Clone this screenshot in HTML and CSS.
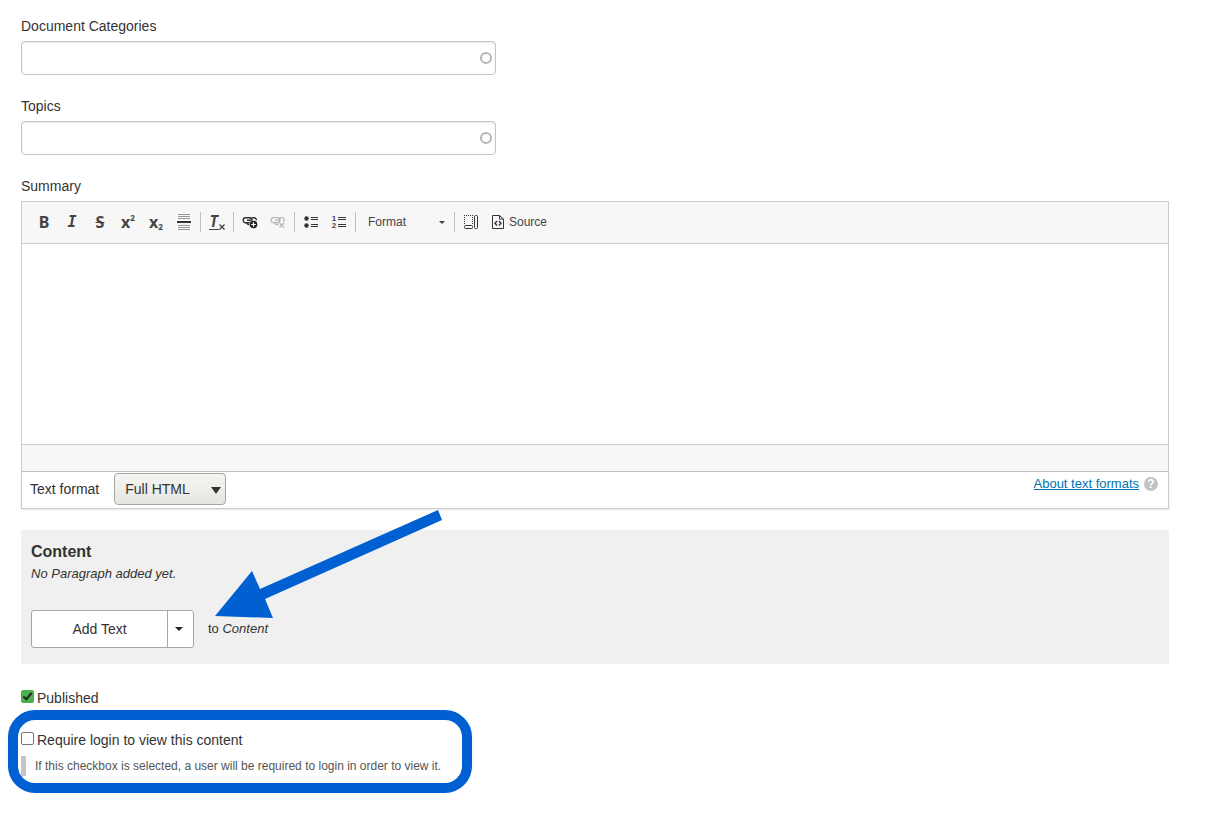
FILE: index.html
```html
<!DOCTYPE html>
<html lang="en">
<head>
  <meta charset="UTF-8">
  <meta name="viewport" content="width=device-width, initial-scale=1.0">
  <title>Create Document</title>
  <link rel="stylesheet" href="styles.css">
</head>
<body>
  <form class="node-form">
    <div class="field">
      <label for="categories">Document Categories</label>
      <div class="autocomplete">
        <input type="text" id="categories">
      </div>
    </div>

    <div class="field">
      <label for="topics">Topics</label>
      <div class="autocomplete">
        <input type="text" id="topics">
      </div>
    </div>

    <div class="field">
      <label for="summary">Summary</label>
      <div class="editor">
        <div class="toolbar">
          <button type="button" class="tool bold" title="Bold">B</button>
          <button type="button" class="tool italic" title="Italic">I</button>
          <button type="button" class="tool strike" title="Strikethrough">S</button>
          <button type="button" class="tool script" title="Superscript">x<sup>2</sup></button>
          <button type="button" class="tool script" title="Subscript">x<sub>2</sub></button>
          <button type="button" class="tool" title="Horizontal line">
            <svg width="14" height="16" viewBox="0 0 14 16">
              <path d="M1 .5h12M1 2.5h12M1 4.5h12M1 11.5h12M1 13.5h12M1 15.5h12" stroke="#999"/>
              <path d="M0 8h14" stroke="#333" stroke-width="2"/>
            </svg>
          </button>
          <span class="separator"></span>
          <button type="button" class="tool clear" title="Remove format">
            <span>T</span>
            <svg width="6" height="6" viewBox="0 0 6 6"><path d="M.5.5l5 5M5.5.5l-5 5" stroke="#444" stroke-width="1.4"/></svg>
          </button>
          <span class="separator"></span>
          <button type="button" class="tool" title="Link">
            <svg width="16" height="14" viewBox="0 0 16 14" fill="none">
              <rect x="1.2" y="2.7" width="8.6" height="5" rx="2.4" stroke="#333" stroke-width="1.4"/>
              <path d="M5 5.2h6M5 7.5a2 2 0 0 0 2 2h2M9.5 2.7H12a2.4 2.4 0 0 1 2.4 2.6" stroke="#333" stroke-width="1.4"/>
              <circle cx="11.5" cy="9.5" r="4.2" fill="#f7f7f7"/>
              <circle cx="11.5" cy="9.5" r="3.8" fill="#222"/>
              <path d="M11.5 7.2v4.6M9.2 9.5h4.6" stroke="#fff" stroke-width="1.2"/>
            </svg>
          </button>
          <button type="button" class="tool" title="Unlink" disabled>
            <svg width="16" height="14" viewBox="0 0 16 14" fill="none" stroke="#b5b5b5" stroke-width="1.3">
              <rect x="1.2" y="2.7" width="8.6" height="5" rx="2.4"/>
              <path d="M5 5.2h6M5 7.5a2 2 0 0 0 2 2h1.5M9.5 2.7H12a2.4 2.4 0 0 1 1.500 4.2"/>
              <path d="M9.5 8l4.5 4.5M14 8l-4.5 4.5"/>
            </svg>
          </button>
          <span class="separator"></span>
          <button type="button" class="tool" title="Bulleted list">
            <svg width="14" height="12" viewBox="0 0 14 12" fill="#333">
              <circle cx="2.5" cy="2.5" r="2.2"/>
              <circle cx="2.5" cy="9.5" r="2.2"/>
              <path d="M7 1h7v1H7zM7 3h7v1H7zM7 8h7v1H7zM7 10h7v1H7z"/>
            </svg>
          </button>
          <button type="button" class="tool numbered" title="Numbered list">
            <span>1<br>2</span>
            <svg width="8" height="12" viewBox="0 0 8 12" fill="#333">
              <path d="M0 1h8v1H0zM0 3h8v1H0zM0 8h8v1H0zM0 10h8v1H0z"/>
            </svg>
          </button>
          <span class="separator"></span>
          <div class="format">
            <select aria-label="Paragraph format">
              <option>Format</option>
            </select>
          </div>
          <span class="separator"></span>
          <button type="button" class="tool" title="Show blocks">
            <svg width="16" height="16" viewBox="0 0 16 16" fill="none" stroke="#333">
              <path d="M1.5 1v9M1 1.5h9M9.5 1v9" stroke-dasharray="1 1"/>
              <rect x="1.5" y="11.5" width="8" height="3" rx="1"/>
              <rect x="11.5" y="1.5" width="3" height="13" rx="1"/>
            </svg>
          </button>
          <button type="button" class="tool source" title="Source">
            <svg width="12" height="16" viewBox="0 0 12 16" fill="none" stroke="#333">
              <path d="M.5 1.5h7l4 3.5v9.500H.5z"/>
              <path d="M7.5 1.5V5h4"/>
              <path d="M5 7L3 9.3l2 2.2M7 7l2 2.3-2 2.2" stroke-width="1.4"/>
            </svg>
            Source
          </button>
        </div>
        <textarea id="summary"></textarea>
        <div class="editor-bottom"></div>
      </div>
      <div class="text-format">
        <label for="format">Text format</label>
        <div class="format-select">
          <select id="format">
            <option>Full HTML</option>
          </select>
        </div>
        <a href="#" class="format-help"><span>About text formats</span><b class="help-icon">?</b></a>
      </div>
    </div>

    <section class="paragraphs">
      <h2>Content</h2>
      <p class="empty">No Paragraph added yet.</p>
      <div class="add-row">
        <div class="split-button">
          <button type="button" class="add">Add Text</button>
          <button type="button" class="toggle" aria-label="List additional actions"></button>
        </div>
        <span>to <em>Content</em></span>
      </div>
      <svg class="arrow" width="227" height="109" viewBox="0 0 227 109">
        <path d="M0 106L37 61l8 18L223 0l4 10L50 89l8 19z" fill="#0060d2"/>
      </svg>
    </section>

    <div class="check">
      <input type="checkbox" id="published" checked>
      <label for="published">Published</label>
    </div>

    <div class="login">
      <div class="check">
        <input type="checkbox" id="login" aria-describedby="login-help">
        <label for="login">Require login to view this content</label>
      </div>
      <p class="description" id="login-help">If this checkbox is selected, a user will be required to login in order to view it.</p>
    </div>
  </form>
</body>
</html>
```
FILE: styles.css
```css
:root {
  --text: #333;
  --line: #ccc;
  --blue: #0060d2;
}

*, *::before, *::after {
  box-sizing: border-box;
}

body {
  margin: 0;
  padding: 16px 37px 20px 21px;
  background: #fff;
  color: var(--text);
  font-family: "Liberation Sans", Arial, sans-serif;
  font-size: 14px;
  line-height: 20px;
}

button, select, input, textarea {
  font: inherit;
  color: inherit;
}

.field {
  margin-bottom: 21px;
}

.field > label {
  display: block;
  margin-bottom: 5px;
}

/* autocomplete inputs with the throbber ring */
.autocomplete {
  display: grid;
  align-items: center;
  max-width: 475px;
}

.autocomplete input {
  grid-area: 1 / 1;
  width: 100%;
  height: 34px;
  padding: 4px 24px 4px 8px;
  border: 1px solid #c4c4c4;
  border-radius: 4px;
  background: #fff;
  box-shadow: inset 0 1px 2px rgba(0, 0, 0, 0.08);
}

.autocomplete::after {
  content: "";
  grid-area: 1 / 1;
  justify-self: end;
  width: 12px;
  height: 12px;
  margin-right: 4px;
  border: 2px solid #b5b5b5;
  border-radius: 50%;
}

/* editor */
.editor {
  border: 1px solid var(--line);
  border-bottom: 0;
}

.toolbar {
  display: flex;
  flex-wrap: wrap;
  align-items: center;
  padding: 6px 8px 7px;
  background: #f7f7f7;
  border-bottom: 1px solid var(--line);
}

.tool {
  display: flex;
  align-items: center;
  justify-content: center;
  width: 28px;
  height: 28px;
  padding: 0;
  border: 0;
  background: none;
  color: #444;
}

.bold, .strike, .script {
  font-family: "Noto Sans", sans-serif;
  font-size: 16px;
  font-weight: 700;
}

.italic, .clear {
  font-family: "DejaVu Sans Mono", monospace;
  font-size: 15px;
  font-style: italic;
  font-weight: 700;
}

.strike {
  text-decoration: line-through;
}

.script sup, .script sub {
  font-size: 8px;
  line-height: 8px;
}

.script sup {
  align-self: flex-start;
  margin-top: 6px;
}

.script sub {
  align-self: flex-end;
  margin-bottom: 5px;
}

.clear span {
  line-height: 14px;
  border-bottom: 1px solid #444;
}

.clear svg {
  align-self: flex-end;
  margin-bottom: 6px;
}

.numbered {
  gap: 2px;
  font-size: 8px;
  font-weight: 700;
  line-height: 7px;
}

.separator {
  width: 1px;
  height: 20px;
  margin: 0 2px;
  background: #c0c0c0;
}

.format, .format-select {
  display: grid;
  align-items: center;
}

.format select, .format-select select {
  grid-area: 1 / 1;
  appearance: none;
}

.format::after, .format-select::after {
  content: "";
  grid-area: 1 / 1;
  justify-self: end;
  pointer-events: none;
}

.format select {
  width: 94px;
  height: 28px;
  padding: 0 10px;
  border: 0;
  background: none;
  color: #444;
  font-size: 12px;
}

.format::after {
  margin-right: 7px;
  border: 3px solid transparent;
  border-top-color: #444;
  border-bottom: 0;
}

.source {
  gap: 5px;
  width: auto;
  padding: 0 7px;
  font-size: 12px;
}

.editor textarea {
  display: block;
  width: 100%;
  height: 200px;
  padding: 20px;
  border: 0;
  resize: none;
}

.editor-bottom {
  height: 28px;
  background: #f7f7f7;
  border-top: 1px solid var(--line);
  border-bottom: 1px solid #c0c0c0;
}

.text-format {
  display: flex;
  align-items: center;
  padding: 1px 10px 3px 8px;
  border: 1px solid var(--line);
  border-top: 0;
  box-shadow: 0 1px 2px rgba(0, 0, 0, 0.1);
}

.format-select {
  margin-left: 15px;
}

.format-select select {
  width: 112px;
  height: 32px;
  padding: 0 10px;
  border: 1px solid #a6a6a6;
  border-radius: 4px;
  background: linear-gradient(#f5f5f1, #e6e6e1);
}

.format-select::after {
  margin: 3px 5px 0 0;
  border: 5px solid transparent;
  border-top: 7px solid var(--text);
  border-bottom: 0;
}

.format-help {
  display: flex;
  align-items: center;
  gap: 5px;
  align-self: flex-start;
  margin-left: auto;
  padding-top: 1px;
  color: #0071b3;
  font-size: 13px;
  text-decoration: none;
}

.format-help span {
  text-decoration: underline;
}

.help-icon {
  width: 14px;
  height: 14px;
  border-radius: 50%;
  background: #c2c2c2;
  color: #fff;
  font-size: 12px;
  line-height: 14px;
  text-align: center;
}

/* paragraphs panel */
.paragraphs {
  position: relative;
  margin-bottom: 24px;
  padding: 12px 10px 16px;
  background: #f0f0f0;
  font-size: 13px;
}

.paragraphs h2 {
  margin: 0 0 2px;
  font-size: 16px;
  line-height: 20px;
}

.empty {
  margin: 0 0 26px;
  font-style: italic;
}

.add-row {
  display: flex;
  align-items: center;
  gap: 14px;
}

.split-button {
  display: flex;
  border: 1px solid #a6a6a6;
  border-radius: 3px;
  background: #fff;
}

.split-button button {
  height: 36px;
  padding: 0;
  border: 0;
  background: none;
  font-size: 14px;
}

.split-button .add {
  min-width: 135px;
  padding: 0 20px;
}

.split-button .toggle {
  display: grid;
  place-items: center;
  width: 26px;
  padding-right: 3px;
  border-left: 1px solid #a6a6a6;
}

.toggle::after {
  content: "";
  border: 4px solid transparent;
  border-top-color: #222;
  border-bottom: 0;
}

.arrow {
  position: absolute;
  top: -20px;
  left: 194px;
}

/* checkboxes */
.check {
  display: flex;
  align-items: center;
  gap: 3px;
}

.check input {
  display: grid;
  place-items: center;
  appearance: none;
  width: 13px;
  height: 13px;
  margin: 0 0 3px;
  border: 1px solid #767676;
  border-radius: 2px;
  background: #fff;
}

.check input:checked {
  border-color: #4caf50;
  background: #4caf50;
}

.check input:checked::after {
  content: "";
  width: 5px;
  height: 9px;
  margin-bottom: 2px;
  border: solid #222;
  border-width: 0 2px 2px 0;
  transform: rotate(40deg);
}

.login {
  position: relative;
  width: fit-content;
  margin-top: 22px;
}

/* highlight frame around the login option */
.login::after {
  content: "";
  position: absolute;
  inset: -20px -31px -17px -13px;
  border: 10px solid var(--blue);
  border-radius: 27px;
  pointer-events: none;
}

.description {
  margin: 6px 0 0;
  padding-left: 9px;
  border-left: 5px solid #c4c4c4;
  color: #555;
  font-size: 12px;
}
```
